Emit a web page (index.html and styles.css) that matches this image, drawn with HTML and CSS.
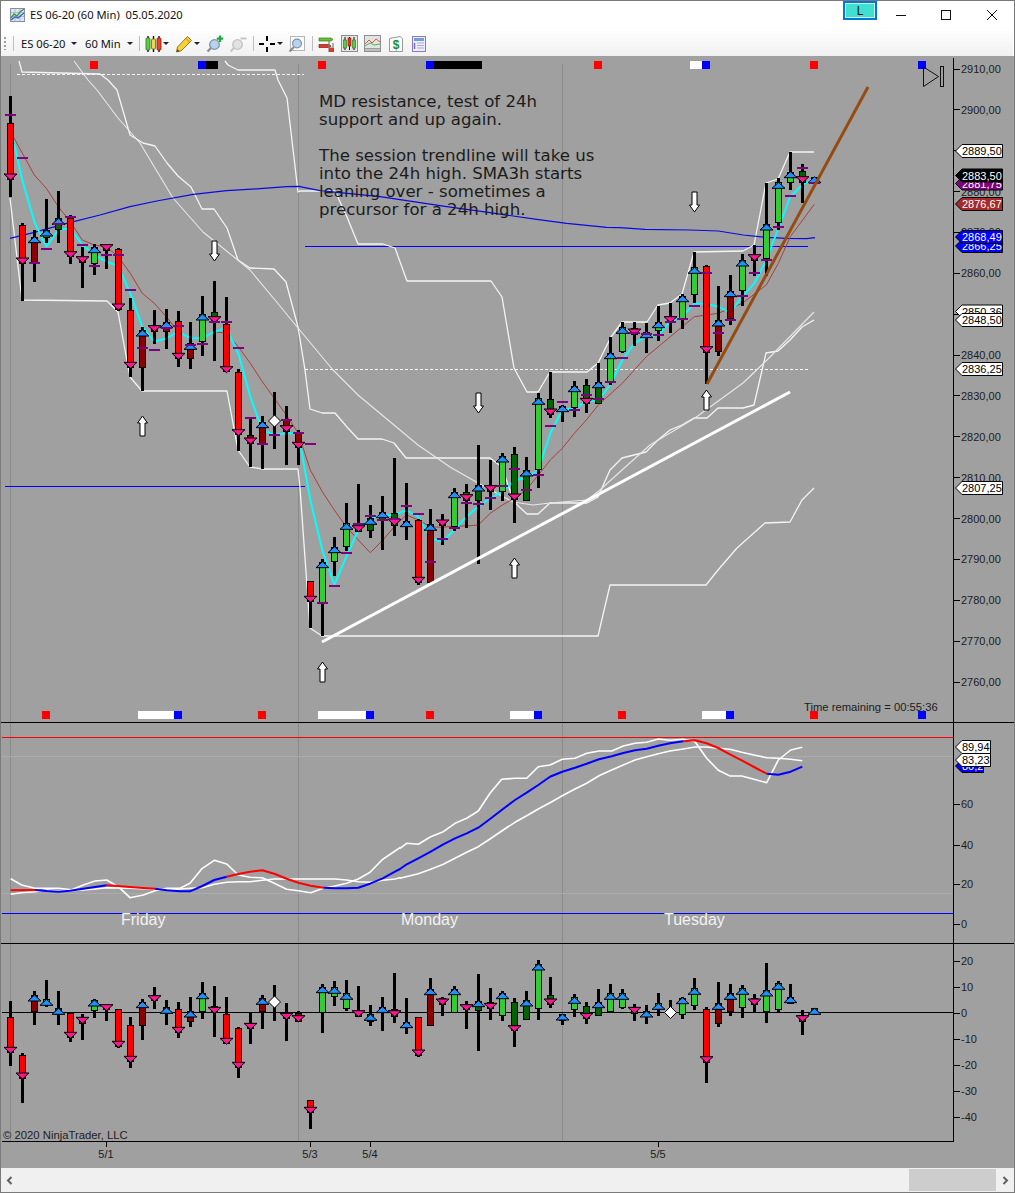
FILE: index.html
```html
<!DOCTYPE html>
<html lang="en">
<head>
<meta charset="utf-8">
<title>ES 06-20 (60 Min) 05.05.2020</title>
<link rel="stylesheet" href="styles.css">
</head>
<body>
<div class="window">
  <header class="titlebar">
    <svg class="app-icon" width="15" height="14" viewBox="0 0 15 14">
      <rect x="0.5" y="0.5" width="14" height="13" fill="#dfe3ee" stroke="#8a8fa5"/>
      <path d="M1 4.5H14M1 8.5H14M5 1V13M10 1V13" stroke="#b4b9cc" fill="none"/>
      <path d="M1 10L4 6L7 8L10 4L14 1" stroke="#2f9e44" stroke-width="1.3" fill="none"/>
      <path d="M1 12L5 9L8 10L14 5" stroke="#2f5fd0" stroke-width="1.2" fill="none"/>
    </svg>
    <span class="title">ES 06-20 (60 Min)&nbsp; 05.05.2020</span>
    <span class="spacer"></span>
    <button class="link-btn">L</button>
    <span class="win-btn win-min"><svg width="10" height="10" viewBox="0 0 10 10"><path d="M0 5.5H10" stroke="#111"/></svg></span>
    <span class="win-btn win-max"><svg width="10" height="10" viewBox="0 0 10 10"><rect x="0.5" y="0.5" width="9" height="9" fill="none" stroke="#111"/></svg></span>
    <span class="win-btn win-close"><svg width="10" height="10" viewBox="0 0 10 10"><path d="M0 0L10 10M10 0L0 10" stroke="#111" fill="none"/></svg></span>
  </header>

  <nav class="toolbar">
    <span class="grip"></span>
    <span class="sep s1"></span>
    <span class="tb-text t1">ES 06-20</span><span class="caret"></span>
    <span class="tb-text t2">60 Min</span><span class="caret"></span>
    <span class="sep s2"></span>
    <svg class="icon i1" width="17" height="18" viewBox="0 0 17 18">
      <path d="M3 1V17M8.5 1V17M14 1V17" stroke="#111" stroke-width="1.4"/>
      <rect x="1" y="3" width="4" height="12" rx="1" fill="#58d13c" stroke="#2c6a1e" stroke-width="0.8"/>
      <rect x="6.5" y="4" width="4" height="10" rx="1" fill="#e8d84a" stroke="#6a611e" stroke-width="0.8"/>
      <rect x="12" y="3" width="4" height="12" rx="1" fill="#e8452e" stroke="#7a1f12" stroke-width="0.8"/>
    </svg><span class="caret c3"></span>
    <svg class="icon i2" width="18" height="18" viewBox="0 0 18 18">
      <path d="M12.5 1.5L16.5 5.5L6 16L1.5 17L2.5 12Z" fill="#f6d13b" stroke="#9a7a18"/>
      <path d="M11 3.5L14.5 7" stroke="#e99a2a" stroke-width="1.2"/>
      <path d="M1.5 17L2.5 14L4.5 16Z" fill="#444"/>
    </svg><span class="caret c4"></span>
    <svg class="icon i3" width="18" height="18" viewBox="0 0 18 18">
      <path d="M1.5 16.5L6 12" stroke="#8a8a8a" stroke-width="2.2"/>
      <circle cx="8.5" cy="9.5" r="4.8" fill="#b7d3ee" stroke="#7e93aa" stroke-width="1.3"/>
      <path d="M14 0.5V7M10.8 3.7H17.2" stroke="#1fa83a" stroke-width="2.2"/>
    </svg>
    <svg class="icon i4" width="18" height="18" viewBox="0 0 18 18">
      <path d="M1.5 16.5L6 12" stroke="#c8c8c8" stroke-width="2.2"/>
      <circle cx="8.5" cy="9.5" r="4.8" fill="#e2e2e2" stroke="#c2c2c2" stroke-width="1.3"/>
      <path d="M11.5 3.5H17.5" stroke="#c6c6c6" stroke-width="2"/>
    </svg>
    <span class="sep s3"></span>
    <svg class="icon i5" width="16" height="16" viewBox="0 0 16 16">
      <path d="M0 8H5M11 8H16M8 0V5M8 11V16" stroke="#000" stroke-width="2"/>
    </svg><span class="caret c5"></span>
    <svg class="icon i6" width="16" height="17" viewBox="0 0 16 17">
      <rect x="1.5" y="1.5" width="14" height="14" fill="#fbfbfb" stroke="#b5b5b5"/>
      <path d="M0.5 16.5L5 12" stroke="#8a8a8a" stroke-width="2"/>
      <circle cx="8" cy="8.5" r="4.4" fill="#b7d3ee" stroke="#7e93aa" stroke-width="1.2"/>
    </svg>
    <span class="sep s4"></span>
    <svg class="icon i7" width="17" height="17" viewBox="0 0 17 17">
      <path d="M1 3H13L15 4.5L13 6H1Z" fill="#63c22e" stroke="#3b7a1a" stroke-width="0.7"/>
      <path d="M1 9.5H11L13 11L11 12.5H1Z" fill="#e2352a" stroke="#8c1a12" stroke-width="0.7"/>
      <path d="M11 6V17M13 12V17M15 8V17" stroke="#7d7d7d" stroke-width="1.2"/>
      <rect x="11" y="13" width="5" height="4" fill="#e2352a"/>
    </svg>
    <svg class="icon i8" width="17" height="17" viewBox="0 0 17 17">
      <rect x="0.5" y="0.5" width="16" height="16" fill="#e5e5e5" stroke="#8e8e8e"/>
      <path d="M4 2V15M8.5 2V15M13 2V15" stroke="#111"/>
      <rect x="2.5" y="5" width="3" height="8" fill="#58d13c" stroke="#2c6a1e" stroke-width="0.6"/>
      <rect x="7" y="3" width="3" height="8" fill="#e2352a" stroke="#7a1f12" stroke-width="0.6"/>
      <rect x="11.5" y="5" width="3" height="8" fill="#58d13c" stroke="#2c6a1e" stroke-width="0.6"/>
    </svg>
    <svg class="icon i9" width="17" height="17" viewBox="0 0 17 17">
      <rect x="0.5" y="0.5" width="16" height="16" fill="#e3e3e3" stroke="#8e8e8e"/>
      <path d="M1 9L5 5L8 8L12 4L16 7" stroke="#e2554a" fill="none"/>
      <path d="M1 11L6 8L10 10L16 9" stroke="#4cba45" fill="none"/>
      <path d="M1 13.5H16M1 15H16" stroke="#9c9c9c"/>
    </svg>
    <svg class="icon i10" width="14" height="16" viewBox="0 0 14 16">
      <path d="M0.5 2.5L11 0.5L13.5 2.5V15.5H0.5Z" fill="#fbfbfb" stroke="#9a9a9a"/>
      <text x="7" y="13" class="dollar">$</text>
    </svg>
    <svg class="icon i11" width="14" height="16" viewBox="0 0 14 16">
      <rect x="0.5" y="0.5" width="13" height="15" fill="#eeeef8" stroke="#8c79c6"/>
      <rect x="2" y="2" width="10" height="3" fill="#6f9edb"/>
      <path d="M5 7H12M5 9.5H12M5 12H12" stroke="#a9a9d6"/>
      <path d="M2.5 7V13" stroke="#7c6bb8" stroke-width="1.5"/>
    </svg>
  </nav>

  <main class="chart">
    <svg id="canvas" class="canvas" width="1013" height="1112" viewBox="1 56 1013 1112"></svg>
    <p class="note">MD resistance, test of 24h
support and up again.

The session trendline will take us
into the 24h high. SMA3h starts
leaning over - sometimes a
precursor for a 24h high.</p>
  </main>

  <footer class="scrollbar">
    <svg class="arrow-l" width="7" height="9" viewBox="0 0 7 9"><path d="M5.5 1L2 4.5L5.5 8" fill="none" stroke="#606060" stroke-width="2"/></svg>
    <span class="spacer"></span>
    <span class="thumb"></span>
    <svg class="arrow-r" width="7" height="9" viewBox="0 0 7 9"><path d="M1.5 1L5 4.5L1.5 8" fill="none" stroke="#606060" stroke-width="2"/></svg>
  </footer>
</div>
<script src="chart.js"></script>
</body>
</html>
```
FILE: styles.css
```css
* { box-sizing: border-box; }
html, body { margin: 0; padding: 0; background: #fff; }
.window {
  width: 1015px; height: 1193px;
  border: 1px solid #7a7a7a;
  display: flex; flex-direction: column;
  overflow: hidden;
}
.titlebar {
  height: 30px; background: #fff;
  display: flex; align-items: flex-start;
  padding-left: 9px;
  font-family: "Noto Sans", "Liberation Sans", sans-serif;
}
.app-icon { margin-top: 7px; }
.title { margin: 6px 0 0 5px; font-size: 11.2px; line-height: 16px; color: #111; }
.spacer { flex: 1; }
.link-btn {
  width: 34px; height: 19px; padding: 0; margin: 0;
  background: #40e0d0;
  border: 2px solid #0078d7;
  outline: 1px solid #cfeef0; outline-offset: -3px;
  font: 12px/14px "Liberation Sans", sans-serif; color: #111;
}
.win-btn { display: flex; justify-content: center; margin-top: 9px; }
.win-min { margin-left: 19px; width: 10px; }
.win-max { margin-left: 35px; width: 10px; }
.win-close { margin-left: 36px; margin-right: 17px; width: 10px; }

.toolbar {
  height: 25px;
  background: linear-gradient(#fdfdfd, #f1f1f1);
  display: flex; align-items: center;
  padding-left: 3px;
  font-family: "Noto Sans", "Liberation Sans", sans-serif;
  margin-right: 1px;
}
.grip { width: 2px; height: 13px; background: repeating-linear-gradient(#9d9d9d 0 2px, transparent 2px 4px); }
.sep { width: 1px; height: 15px; background: #bdbdbd; flex: none; }
.s1 { margin-left: 7px; }
.s2 { margin-left: 6px; }
.s3 { margin-left: 6px; }
.s4 { margin-left: 7px; }
.tb-text { font-size: 11.2px; color: #111; line-height: 16px; white-space: nowrap; }
.t1 { margin-left: 7px; width: 50px; }
.t2 { margin-left: 8px; width: 42px; }
.caret { width: 0; height: 0; border: 3px solid transparent; border-top: 3px solid #222; border-bottom: 0; flex: none; }
.c3 { margin-left: 1px; }
.c4 { margin-left: 1px; }
.c5 { margin-left: 2px; }
.icon { flex: none; }
.i1 { margin-left: 5px; }
.i2 { margin-left: 6px; }
.i3 { margin-left: 6px; }
.i4 { margin-left: 5px; }
.i5 { margin-left: 5px; }
.i6 { margin-left: 6px; }
.i7 { margin-left: 5px; }
.i8 { margin-left: 6px; }
.i9 { margin-left: 6px; }
.i10 { margin-left: 8px; }
.i11 { margin-left: 9px; }
.dollar { font: bold 12px "Liberation Sans", sans-serif; fill: #1f8a2f; text-anchor: middle; }

.chart { position: relative; height: 1112px; background: #a0a0a0; flex: none; }
.canvas { display: block; }
.note {
  position: absolute; left: 318px; top: 37px; margin: 0;
  font: 16.6px/18px "DejaVu Sans", sans-serif;
  color: #1c1c1c; white-space: pre;
}
.scrollbar { height: 24px; background: #f0f0f0; display: flex; align-items: center; flex: none; padding: 0 5px 0 5px; }
.thumb { width: 87px; height: 22px; background: #cdcdcd; margin-right: 6px; }
.arrow-l, .arrow-r { flex: none; }

/* chart strokes */
.ln { fill: none; stroke-linejoin: round; }
.w-thin { stroke: #f4f4f4; stroke-width: 1.3; }
.w-fine { stroke: #e8e8e8; stroke-width: 1.1; }
.cyan { stroke: #00ffff; stroke-width: 2; }
.sma { stroke: #a8403c; stroke-width: 1; }
.blue1 { stroke: #0a0ae0; stroke-width: 1.2; }
.osc-w { stroke: #fff; stroke-width: 1.6; }
.osc-b { stroke: #0000ff; stroke-width: 2; }
.osc-r { stroke: #ff0000; stroke-width: 2; }
.trend-w { stroke: #fff; stroke-width: 3; }
.trend-b { stroke: #964b12; stroke-width: 3; }
.hl { stroke-width: 1; shape-rendering: crispEdges; }
.hl-b { stroke: #000; }
.hl-blue { stroke: #0000ff; }
.hl-red { stroke: #ff0000; }
.hl-grey { stroke: #ababab; }
.hl-sess { stroke: #8a8a8a; }
.hl-dash { stroke: #fff; stroke-dasharray: 3 2; }
.wick { fill: #000; shape-rendering: crispEdges; }
.body { stroke: #000; stroke-width: 1; shape-rendering: crispEdges; }
.k-R { fill: #ff0000; }
.k-D { fill: #8b0000; }
.k-G { fill: #32cd32; }
.k-K { fill: #006400; }
.up { fill: #1e90ff; stroke: #000; stroke-width: 1; }
.dn { fill: #ff1493; stroke: #000; stroke-width: 1; }
.dia { fill: #fff; stroke: #000; stroke-width: 1; }
.tick { fill: #800080; shape-rendering: crispEdges; }
.arr { fill: #fff; stroke: #000; stroke-width: 1; }
.sq { shape-rendering: crispEdges; }
.sq-r { fill: #ff0000; }
.sq-b { fill: #0000ff; }
.sq-k { fill: #000; }
.sq-w { fill: #fff; }
.end-mark { fill: none; stroke: #111; stroke-width: 1; }
.ax { font: 11px "Liberation Sans", sans-serif; fill: #1c1c1c; }
.ax-c { text-anchor: middle; }
.timer { font: 11.25px "Liberation Sans", sans-serif; fill: #1c1c1c; }
.stamp { font: 11.3px "Liberation Sans", sans-serif; fill: #222; }
.day { font: 16px "Liberation Sans", sans-serif; fill: #f2f2f2; }
.tag { stroke: #000; stroke-width: 1; }
.tag-w { fill: #fff; }
.tag-k { fill: #000; }
.tag-p { fill: #800080; }
.tag-r { fill: #a52a2a; }
.tag-b { fill: #0000ff; }
.ax.tx-d { fill: #000; }
.ax.tx-l { fill: #fff; }
```
FILE: chart.js
```js
// Chart data is kept in the units read off the chart: y = y0 + value / 3
const markList = ["d","d","u","u","u","d","d","u","d","d","d","u","d","u","d","u","u","d","d","d","d","u","x","d","d","d","u","u","u","d","u","u","d","u","d","u","d","u","d","u","d","u","d","u","u","d","u","u","d","u","u","u","d","u","u","d","u","u","d","u","u","u","d","u","u","u","d","u"];
const kindList = ["R","R","D","G","K","R","D","G","K","R","R","D","D","D","R","D","G","K","R","R","D","D","W","D","D","R","G","G","G","K","K","K","K","K","R","D","D","G","K","K","K","G","K","K","G","K","K","G","K","K","G","G","K","K","G","K","G","G","R","D","D","G","K","G","G","G","K","K"];

function seg(y0, rows) {
  return rows.map(r => r.map((v, i) => (r[2] === 0 && (i === 2 || i === 3)) ? null : y0 + v / 3));
}
const upper = [].concat(
  seg(90, [[18,322,100,270,75],[400,632,405,522,204],[420,575,440,520,519],[327,460,420,445,477],[303,458,385,422,402],[376,522,385,503,381],[472,593,500,518,465],[462,555,470,520,528],[462,537,465,482,494],[475,662,478,660,494],[625,860,660,835,600],[712,903,720,835,774],[660,762,708,725,780],[657,777,695,725,714],[663,830,694,808,708],[697,837,760,808,765],[618,797,672,757,762],[573,812,667,698,696],[621,845,703,848,696],[838,1082,847,1037,774],[985,1130,1035,1062,984],[978,1137,995,1060,1062],[907,1077,0,0,1035],[948,1125,990,1025,990]]),
  seg(370, [[180,285,190,235,190],[633,773,633,697,221],[568,798,575,697,699],[502,618,530,575,648],[400,543,460,533,548],[342,485,462,485,463],[405,503,445,485,437],[378,540,425,450,449],[265,497,428,466,446],[340,510,452,470,407],[448,645,450,640,432],[418,640,463,640,576],[432,524,450,468,507],[355,483,365,470,474],[342,475,365,392,398],[225,582,345,392,402],[270,420,347,365,384],[248,392,258,365,348],[232,458,253,390,296],[262,392,300,392,360],[68,353,85,300,315],[5,145,88,135,168],[105,155,107,125,96],[33,140,47,113,120],[28,128,45,103,75],[-21,100,35,100,87]]),
  seg(140, [[590,735,638,725,726],[545,640,562,637,654],[545,618,565,585,579],[550,638,575,592,582],[497,603,545,572,585],[490,578,530,548,545],[462,567,467,535,537],[335,490,382,467,497],[375,732,378,638,398],[438,647,540,637,579],[405,555,452,537,540],[343,498,360,452,467],[315,408,345,362,399],[128,408,252,358,360],[115,270,127,250,261],[35,150,95,127,168],[72,188,92,128,84],[110,130,110,128,128]])
);
const lower = seg(950, [[153,347,202,310],[310,458,316,387],[123,224,135,187],[90,172,148,167],[123,224,175,197],[185,275,190,265],[192,270,203,220],[148,203,150,182],[163,212,163,182],[176,295,178,292],[202,353,226,337],[148,270,155,227],[111,177,136,155],[150,224,172,192],[156,263,178,250],[140,230,183,215],[96,207,128,185],[108,260,168,190],[141,283,193,283],[230,384,235,355],[187,282,220,238],[136,237,145,187],[105,213,0,0],[160,272,190,208],[184,217,188,215],[450,537,450,490],[103,248,110,187],[93,167,112,143],[90,183,130,177],[108,200,182,200],[165,228,193,218],[141,242,170,187],[69,218,176,200],[144,252,215,233],[200,320,200,318],[84,227,116,227],[142,198,145,165],[108,190,116,187],[154,237,163,182],[72,302,152,182],[114,210,157,178],[122,212,128,197],[145,291,157,245],[123,210,150,210],[30,210,42,176],[81,174,136,165],[192,225,192,212],[132,200,142,182],[156,222,168,208],[117,197,155,197],[102,190,130,187],[118,176,130,176],[163,212,170,190],[166,222,183,198],[129,197,160,180],[150,205,0,0],[140,207,143,193],[84,180,115,170],[172,398,176,338],[97,230,160,224],[102,197,130,186],[105,203,115,176],[133,190,145,165],[40,218,120,187],[94,190,100,182],[102,160,140,160],[181,254,195,215],[175,195,175,195]]);

const cx = i => 10.5 + 12 * i;
let out = "";
const line = (pts, cls) => { out += `<polyline class="ln ${cls}" points="${pts.map(p => p[0].toFixed(1) + "," + p[1].toFixed(1)).join(" ")}"/>`; };
// points read in a 3x crop with origin (ox, oy)
const zp = (ox, oy, a) => { const r = []; for (let i = 0; i < a.length; i += 2) r.push([ox + a[i] / 3, oy + a[i + 1] / 3]); return r; };
const hl = (x1, x2, y, cls) => { out += `<line class="hl ${cls}" x1="${x1}" x2="${x2}" y1="${y}" y2="${y}"/>`; };
const vl = (x, y1, y2, cls) => { out += `<line class="hl ${cls}" x1="${x}" x2="${x}" y1="${y1}" y2="${y2}"/>`; };
const text = (x, y, s, cls) => { out += `<text class="${cls}" x="${x}" y="${y}">${s}</text>`; };

// session dividers
[10.5, 298.5, 562.5].forEach(x => vl(x, 64, 1141, "hl-sess"));

// level lines
hl(17, 304, 74.5, "hl-dash"); hl(305, 808, 369.5, "hl-dash");
hl(5, 305, 486.5, "hl-blue"); hl(305, 808, 246.5, "hl-blue");
hl(2, 954, 737.5, "hl-red"); hl(2, 954, 756.5, "hl-grey"); hl(2, 954, 893.5, "hl-grey"); hl(2, 954, 913.5, "hl-blue");

// envelope lines
line([[19,61],[22,72],[100,74],[108,80],[117,90],[130,135],[143,143],[155,146],[167,163],[178,176],[191,187],[202,209],[214,209],[227,228],[238,260],[250,268],[274,269],[286,282],[298,327],[305,370],[310,409],[322,413],[335,413],[347,427],[358,439],[382,439],[394,443],[406,458],[490,458],[502,467],[514,502],[527,514],[538,514],[550,503],[587,503],[598,497],[610,470],[622,458],[634,455],[646,452],[658,440],[670,430],[682,425],[694,418],[707,418],[718,408],[743,408],[754,405],[766,353],[778,351],[790,340],[802,327],[814,320]], "w-thin");
line([[74,61],[88,80],[97,90],[118,118],[140,143],[173,198],[203,232],[213,240],[250,270],[275,300],[298,328],[333,370],[358,395],[418,445],[450,467],[478,483],[513,502],[533,505],[550,503],[587,500],[600,490],[622,470],[650,445],[695,418],[743,383],[767,360],[814,312]], "w-fine");
line([[225,61],[228,65],[238,70],[275,70],[278,80],[283,90],[287,98],[298,192],[300,191],[335,191],[347,217],[358,244],[383,244],[395,248],[407,281],[491,281],[502,297],[514,368],[527,392],[538,392],[550,372],[587,372],[598,363],[611,337],[622,322],[647,322],[658,305],[670,303],[682,294],[694,252],[743,251],[754,245],[766,183],[778,179],[790,152],[814,152]], "w-thin");
line([[10,198],[22,300],[107,301],[118,312],[130,377],[142,391],[227,391],[238,450],[250,467],[263,469],[298,469],[300,488],[310,628],[322,636],[598,636],[610,585],[706,585],[718,570],[737,548],[765,523],[790,522],[802,500],[814,488]], "w-thin");

// SMA (blue curve)
line(zp(0,90,[30,445,100,428,200,400,300,375,390,350,470,333,580,313,680,302,780,296,860,290,900,289]).concat(zp(300,60,[0,380,60,392,240,410,440,440,570,458,710,478,800,490,920,502,960,503]), zp(600,140,[135,268,270,270,355,273,430,285,500,292,560,295,620,296,645,293])), "blue1");
// slow MA
line(zp(0,90,[40,140,103,255,139,295,175,350,211,395,247,450,283,465,319,470,355,500,391,550,427,610,463,640,499,680,535,725,571,745,607,745,643,725,679,730,715,770,751,820,787,875,823,925,859,975,895,1030]).concat(zp(300,370,[31,300,67,365,103,420,139,470,175,510,211,548,247,512,283,470,319,435,355,450,391,470,427,472,463,468,499,468,535,465,571,430,607,405,643,385,679,360,715,315,751,270,787,235,823,190,859,150,895,105]), zp(600,140,[67,730,139,650,211,590,283,530,355,520,427,490,499,435,535,370,571,290,643,193])), "sma");
// fast MA
line(zp(0,90,[40,150,67,270,103,395,139,470,175,420,211,415,247,465,283,495,319,515,355,528,391,610,427,710,463,755,499,745,535,725,571,745,607,745,643,725,679,715,715,790,751,920,787,1020,823,1035,859,1030,895,1030]).concat(zp(300,370,[31,390,67,540,103,645,139,560,175,480,211,445,247,435,283,435,319,420,355,440,391,505,427,515,463,480,499,440,535,410,571,385,607,365,643,330,679,325,715,300,751,190,787,120,823,115,859,95,895,90]), zp(600,140,[31,735,67,660,103,610,139,590,175,585,211,545,247,530,283,490,319,492,355,500,391,517,427,470,463,430,499,360,535,265,571,170,607,135,643,115])), "cyan");

// candles
function marker(c, top, bot, m) {
  if (m === "u") out += `<polygon class="up" points="${c - 6.5},${top + 6} ${c},${top} ${c + 6.5},${top + 6}"/>`;
  if (m === "d") out += `<polygon class="dn" points="${c - 6.5},${bot - 6} ${c},${bot} ${c + 6.5},${bot - 6}"/>`;
}
function diamond(c, y) { out += `<polygon class="dia" points="${c - 6},${y} ${c},${y - 6} ${c + 6},${y} ${c},${y + 6}"/>`; }
function candle(i, r, diaY) {
  const c = cx(i), k = kindList[i];
  out += `<rect class="wick" x="${c - 1.5}" y="${r[0].toFixed(1)}" width="3" height="${(r[1] - r[0]).toFixed(1)}"/>`;
  if (r[2] === null) { diamond(c, diaY); return; }
  if (k !== "W") out += `<rect class="body k-${k}" x="${c - 3}" y="${Math.round(r[2]) + .5}" width="6" height="${Math.max(2, Math.round(r[3] - r[2]) - 1)}"/>`;
  marker(c, r[2], r[3], markList[i]);
}
upper.forEach((r, i) => {
  candle(i, r, 421);
  out += `<rect class="tick" x="${cx(i) - 5.5}" y="${Math.round(r[4]) - 1}" width="11" height="2"/>`;
});

// trendlines
line([[322,642],[790,392]], "trend-w");
line([[707,384],[868,87]], "trend-b");

// event arrows
function arrowUp(c, t) { out += `<polygon class="arr" points="${c - 2.5},${t + 20} ${c - 2.5},${t + 7} ${c - 5},${t + 7} ${c},${t} ${c + 5},${t + 7} ${c + 2.5},${t + 7} ${c + 2.5},${t + 20}"/>`; }
function arrowDn(c, b) { out += `<polygon class="arr" points="${c - 2.5},${b - 20} ${c - 2.5},${b - 7} ${c - 5},${b - 7} ${c},${b} ${c + 5},${b - 7} ${c + 2.5},${b - 7} ${c + 2.5},${b - 20}"/>`; }
arrowUp(142.5, 416); arrowUp(514.5, 558); arrowUp(322.5, 662); arrowUp(706.5, 390);
arrowDn(214.5, 261); arrowDn(478.5, 413); arrowDn(694.5, 212);

// session squares
const sq = (x, w, y, k) => { out += `<rect class="sq sq-${k}" x="${x}" y="${y}" width="${w}" height="7.5"/>`; };
[[90,8,"r"],[198,8,"b"],[206,12,"k"],[318,8,"r"],[426,8,"b"],[434,48,"k"],[594,8,"r"],[690,12,"w"],[702,8,"b"],[810,8,"r"],[918,8,"b"]].forEach(a => sq(a[0], a[1], 61, a[2]));
[[42,8,"r"],[138,36,"w"],[174,8,"b"],[258,8,"r"],[318,48,"w"],[366,8,"b"],[426,8,"r"],[510,24,"w"],[534,8,"b"],[618,8,"r"],[702,24,"w"],[726,8,"b"],[810,8,"r"],[918,8,"b"]].forEach(a => sq(a[0], a[1], 711, a[2]));

// jump-to-end control
out += `<polygon class="end-mark" points="923.5,67 923.5,86.5 938.5,76.5"/><rect class="end-mark" x="940.5" y="66.5" width="3" height="20"/>`;

// oscillator panel
line(zp(0,725,[32,461,65,480,105,490,175,490,215,494,250,480,285,468,320,465,355,485,390,518,430,510,465,497,500,490,540,490,570,475,607,430,643,406,680,417,715,450,750,457,787,458,823,475,860,493,895,497,932,503,970,490,1005,483,1040,475,1075,462,1110,442,1148,403,1185,378,1200,368]).concat(zp(400,725,[0,370,20,355,55,358,92,335,130,320,165,295,200,280,235,258,270,205,305,163,345,160,380,160,415,125,450,120,487,103,525,100,560,85,597,78,635,78,670,63,705,55,740,52,775,42,810,46,850,43,885,50,920,100,955,136,990,153,1025,153,1062,163,1100,173,1135,105,1172,75,1207,67])), "osc-w");
line(zp(0,725,[32,508,65,503,105,500,140,495,175,497,210,497,250,495,285,492,320,488,390,490,430,491,465,492,500,495,540,492,570,490,607,488,643,478,680,472,715,470,750,470,787,466,823,462,895,462,965,462,1005,462,1040,465,1075,470,1110,472,1148,466,1185,462,1200,458]).concat(zp(400,725,[0,460,55,446,92,433,130,418,165,400,200,382,235,365,270,342,305,318,345,292,380,272,415,252,450,233,487,212,525,192,560,175,597,152,635,135,670,120,705,105,740,95,775,86,810,78,850,72,885,66,920,66,955,70,990,73,1025,82,1062,90,1100,98,1135,100,1172,103,1207,107])), "osc-w");
const B = "osc-b", R = "osc-r";
line(zp(0,725,[32,496,105,495]), R);
line(zp(0,725,[105,495,140,498,175,500,210,497,250,491,285,486,320,481]), B);
line(zp(0,725,[320,481,355,483,390,486,430,489,465,491]), R);
line(zp(0,725,[465,491,500,496,540,499,570,499,607,483,643,465,680,455]), B);
line(zp(0,725,[680,455,715,447,750,440,787,436,823,446,860,461,895,473,932,482,970,488]), R);
line(zp(0,725,[970,488,1005,490,1040,490,1075,488,1110,476,1148,460,1185,440,1200,432]).concat(zp(400,725,[0,432,20,418,55,400,92,380,130,358,165,340,200,325,235,308,270,282,305,255,345,225,380,203,415,180,450,155,487,140,525,128,560,116,597,103,635,94,670,84,705,76,740,71,775,62,810,55,850,49])), B);
line(zp(400,725,[850,49,885,46,920,55,955,69,990,88,1025,106,1062,126,1100,146]), R);
line(zp(400,725,[1100,146,1135,149,1172,140,1207,125]), B);
text(121, 925, "Friday", "day"); text(401, 925, "Monday", "day"); text(664, 925, "Tuesday", "day");

// lower histogram panel
hl(2, 954, 1012.5, "hl-b");
lower.forEach((r, i) => candle(i, r, i === 22 ? 1002 : 1012.5));

// frame
hl(0, 1015, 722.5, "hl-b"); hl(0, 1015, 943.5, "hl-b"); hl(2, 954, 1141.5, "hl-b");
vl(953.5, 58, 1141, "hl-b");

// axes
const axis = (v, y) => { hl(953, 960, Math.floor(y) + .5, "hl-b"); text(961, y + 4, v, "ax"); };
for (let p = 2910, n = 0; p >= 2760; p -= 10, n++) axis(p + ",00", 69 + n * 40.87);
[["60",804],["40",845],["20",884],["0",924]].forEach(a => axis(a[0], a[1]));
[["20",961],["10",987],["0",1013],["-10",1039],["-20",1065],["-30",1091],["-40",1117]].forEach(a => axis(a[0], a[1]));
[["5/1",106.5],["5/3",310.5],["5/4",370.5],["5/5",658.5]].forEach(a => { vl(a[1], 1141, 1147, "hl-b"); text(a[1] - .5, 1158, a[0], "ax ax-c"); });

text(804, 711, "Time remaining = 00:55:36", "timer");
text(3, 1139, "© 2020 NinjaTrader, LLC", "stamp");

// price tags
function tag(y, s, col, right) {
  const tx = col === "w" ? "tx-d" : "tx-l";
  const r = right || 1002.5;
  out += `<polygon class="tag tag-${col}" points="955.5,${y} 962,${y - 6.5} ${r},${y - 6.5} ${r},${y + 6.5} 962,${y + 6.5}"/>`;
  text(962, y + 4, s, "ax " + tx);
}
tag(311.5, "2850,36", "w"); tag(320, "2848,50", "w"); tag(369, "2836,25", "w"); tag(488, "2807,25", "w");
tag(151, "2889,50", "w"); tag(183.5, "2881,75", "p"); tag(175.5, "2883,50", "k"); tag(204, "2876,67", "r");
tag(246, "2866,25", "b"); tag(237, "2868,49", "b");
tag(766, "80,2", "b", 983.5); tag(747, "89,94", "w", 990.5); tag(760, "83,23", "w", 990.5);

document.getElementById("canvas").innerHTML = out;
```
